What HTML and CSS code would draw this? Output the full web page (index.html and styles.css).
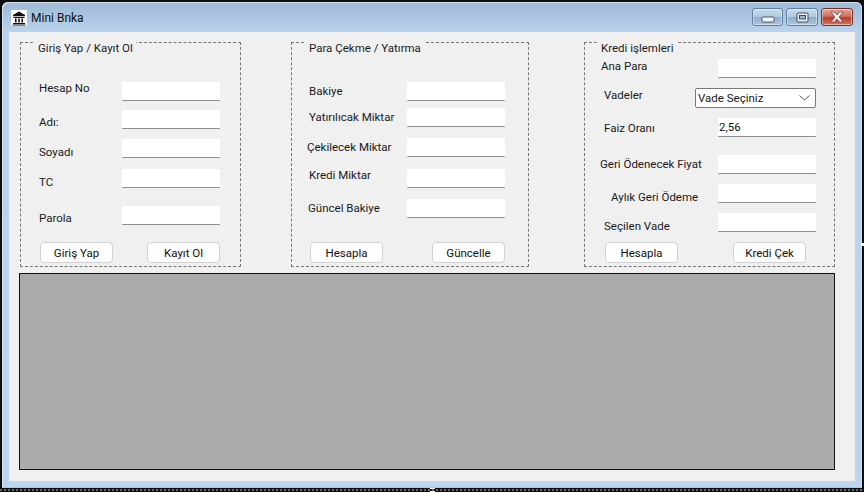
FILE: index.html
```html
<!DOCTYPE html>
<html lang="tr">
<head>
<meta charset="utf-8">
<title>Mini Bnka</title>
<link rel="stylesheet" href="styles.css">
</head>
<body>
<div class="window">
  <header class="titlebar">
    <span class="app-icon">
      <svg width="16" height="16" viewBox="0 0 16 16"><path d="M8 1.500 14 5v1.200H2V5z" fill="#111"/><path d="M2.500 7h11v1h-11zM2 13h12v1H2zM1.500 14.500h13v1h-13z" fill="#111"/><path d="M4 8.500h1.600v4H4zM7.200 8.500h1.600v4H7.200zM10.400 8.500H12v4h-1.600z" fill="#111"/></svg>
    </span>
    <span class="title">Mini Bnka</span>
    <div class="controls">
      <span class="ctl ctl-min"><svg width="14" height="7" viewBox="0 0 14 7"><rect x="1" y="1" width="12" height="5" rx="1" fill="#f4f6f8" stroke="#4a5a6c"/></svg></span>
      <span class="ctl ctl-max"><svg width="13" height="11" viewBox="0 0 13 11"><rect x="1" y="1" width="11" height="9" rx="1" fill="#eef2f6" stroke="#3f4f60"/><rect x="3.500" y="3.500" width="6" height="3.500" fill="#9db6cf" stroke="#3f4f60"/></svg></span>
      <span class="ctl ctl-close"><svg width="18" height="12" viewBox="0 0 18 12"><path d="M3 1h3.500L9 4l2.500-3H15l-4 5 4 5h-3.500L9 8l-2.500 3H3l4-5z" fill="#f4f4f4" stroke="#6e3a34" stroke-width=".7"/></svg></span>
    </div>
  </header>
  <main class="client">
    <div class="panels">
      <section class="panel panel-login">
        <h2 class="legend">Giriş Yap / Kayıt Ol</h2>
        <div class="fields">
          <div class="row"><label class="lbl lbl-hesap">Hesap No</label><input class="box"></div>
          <div class="row"><label class="lbl lbl-adi">Adı:</label><input class="box"></div>
          <div class="row"><label class="lbl lbl-soyadi">Soyadı</label><input class="box"></div>
          <div class="row"><label class="lbl lbl-tc">TC</label><input class="box"></div>
          <div class="row"><label class="lbl lbl-parola">Parola</label><input class="box"></div>
        </div>
        <div class="actions">
          <button class="btn">Giriş Yap</button>
          <button class="btn">Kayıt Ol</button>
        </div>
      </section>
      <section class="panel panel-cash">
        <h2 class="legend">Para Çekme / Yatırma</h2>
        <div class="fields">
          <div class="row"><label class="lbl lbl-bakiye">Bakiye</label><input class="box"></div>
          <div class="row"><label class="lbl lbl-yatir">Yatırılıcak Miktar</label><input class="box"></div>
          <div class="row"><label class="lbl lbl-cek">Çekilecek Miktar</label><input class="box"></div>
          <div class="row"><label class="lbl lbl-kredi">Kredi Miktar</label><input class="box"></div>
          <div class="row"><label class="lbl lbl-guncel">Güncel Bakiye</label><input class="box"></div>
        </div>
        <div class="actions">
          <button class="btn">Hesapla</button>
          <button class="btn">Güncelle</button>
        </div>
      </section>
      <section class="panel panel-credit">
        <h2 class="legend">Kredi işlemleri</h2>
        <div class="fields">
          <div class="row"><label class="lbl lbl-ana">Ana Para</label><input class="box"></div>
          <div class="row"><label class="lbl lbl-vade">Vadeler</label>
            <div class="combo"><span>Vade Seçiniz</span><svg width="11" height="6" viewBox="0 0 11 6"><path d="M.5.5 5.500 5l5-4.500" fill="none" stroke="#555"/></svg></div>
          </div>
          <div class="row"><label class="lbl lbl-faiz">Faiz Oranı</label><input class="box" value="2,56"></div>
          <div class="row"><label class="lbl lbl-geri">Geri Ödenecek Fiyat</label><input class="box"></div>
          <div class="row"><label class="lbl lbl-aylik">Aylık Geri Ödeme</label><input class="box"></div>
          <div class="row"><label class="lbl lbl-secilen">Seçilen Vade</label><input class="box"></div>
        </div>
        <div class="actions">
          <button class="btn">Hesapla</button>
          <button class="btn">Kredi Çek</button>
        </div>
      </section>
    </div>
    <div class="grid-view"></div>
  </main>
</div>
<span class="handle handle-right"></span>
<span class="handle handle-bottom"></span>
</body>
</html>
```
FILE: styles.css
```css
* { box-sizing: border-box; }
html, body { margin: 0; height: 100%; }
body {
  width: 864px;
  height: 492px;
  overflow: hidden;
  padding: 2px 2px 0;
  position: relative;
  background: #0d0d0d;
  font: 11.5px/16px Roboto, "Noto Sans", sans-serif;
  color: #1a1a1a;
}
body::after {
  content: "";
  position: absolute;
  left: 0;
  right: 0;
  bottom: 1px;
  height: 2px;
  background: repeating-linear-gradient(90deg, #6a6a6a 0 2px, #111 2px 4px);
}
.window {
  width: 860px;
  height: 486px;
  display: flex;
  flex-direction: column;
  border-radius: 6px 6px 0 0;
  background: linear-gradient(180deg, #9db9d6 0, #bad3ec 30px, #bdd6ef 100%);
  border-bottom: 1px solid #79dcf6;
  box-shadow: inset 1px 1px 0 #d5e2ef, inset -1px 0 0 #c8dcf0;
}
.titlebar {
  height: 30px;
  flex: none;
  display: flex;
  align-items: center;
  padding: 2px 9px 0;
}
.app-icon {
  width: 16px;
  height: 16px;
  background: #fff;
  display: flex;
  margin-right: 4px;
}
.title { font-size: 12px; color: #111; }
.controls { margin-left: auto; display: flex; gap: 3px; margin-top: -2px; }
.ctl {
  height: 18px;
  width: 31px;
  display: flex;
  align-items: center;
  justify-content: center;
  border: 1px solid #5f7f9f;
  border-radius: 3px;
  box-shadow: inset 0 0 0 1px rgba(255,255,255,.45);
  background: linear-gradient(180deg, #c9d9ea 0, #b3c9df 48%, #8fadcb 52%, #adc6de 100%);
}
.ctl-max { width: 32px; }
.ctl-close {
  width: 32px;
  border-color: #7a3028;
  background: linear-gradient(180deg, #e3a79c 0, #cf6f60 45%, #b53c2c 55%, #d07b68 100%);
}
.ctl-min svg { margin-top: 5px; }

.client {
  margin: 0 7px;
  height: 449px;
  background: #f0f0f0;
  padding: 10px 0 0 10px;
  display: flex;
  flex-direction: column;
}
.panels { display: flex; margin-left: 1px; }
.panel {
  position: relative;
  height: 225px;
  border: 1px dashed #777;
  display: flex;
  flex-direction: column;
}
.panel-login { width: 221px; padding: 39px 20px 3px 18px; }
.panel-cash { width: 238px; margin-left: 50px; padding: 39px 23px 3px 15px; }
.panel-credit { width: 251px; margin-left: 55px; padding: 16px 19px 3px 15px; }
.legend {
  position: absolute;
  top: -1px;
  margin: 0;
  padding: 0 3px;
  height: 14px;
  font: inherit;
  line-height: 12px;
  background: #f0f0f0;
  white-space: nowrap;
}
.panel-login .legend { left: 14px; }
.panel-cash .legend { left: 14px; }
.panel-credit .legend { left: 13px; }

.fields { display: grid; flex: 1; }
.panel-login .fields { grid-template-rows: 28px 29px 30px 37px 36px; }
.panel-cash .fields { grid-template-rows: 26px 30px 31px 30px 43px; }
.panel-credit .fields { grid-template-rows: 29px 30px 37px 29px 29px 29px; }
.row { display: flex; align-items: flex-start; }
.lbl { white-space: nowrap; flex: none; }
.panel-login .lbl { width: 83px; }
.panel-cash .lbl { width: 100px; }
.panel-credit .lbl { width: 116px; }
.box {
  display: block;
  flex: none;
  width: 98px;
  height: 19px;
  border: 0;
  border-bottom: 1px solid #8f8f8f;
  border-radius: 1px;
  background: #fff;
  padding: 0 1px;
  margin-left: auto;
  font: inherit;
  color: #111;
  outline: 0;
}
.combo {
  margin-left: -21px;
  width: 121px;
  height: 20px;
  flex: none;
  display: flex;
  align-items: center;
  justify-content: space-between;
  padding: 0 5px 0 2px;
  background: #fff;
  border: 1px solid #7a7a7a;
  border-radius: 2px;
}
.lbl-hesap { margin-top: -2px; }
.lbl-adi { margin-top: 4px; }
.lbl-soyadi { margin-top: 5px; }
.lbl-tc { margin-top: 5px; }
.lbl-parola { margin-top: 4px; }
.lbl-bakiye { margin-top: 1px; padding-left: 2px; }
.lbl-yatir { margin-top: 1px; padding-left: 2px; }
.lbl-cek { margin-top: 1px; }
.lbl-kredi { margin-top: -2px; padding-left: 2px; }
.lbl-guncel { margin-top: 1px; padding-left: 1px; }
.lbl-ana { margin-top: -1px; padding-left: 1px; }
.lbl-vade { margin-top: -1px; padding-left: 4px; }
.lbl-faiz { margin-top: 2px; padding-left: 4px; }
.lbl-geri { margin-top: 1px; }
.lbl-aylik { margin-top: 5px; padding-left: 11px; }
.lbl-secilen { margin-top: 5px; padding-left: 4px; }

.actions { display: flex; justify-content: space-between; flex: none; }
.panel-login .actions { padding-left: 1px; }
.panel-cash .actions { padding-left: 3px; }
.panel-credit .actions { padding: 0 9px 0 5px; }
.btn {
  width: 73px;
  height: 21px;
  padding: 0;
  background: #fdfdfd;
  border: 1px solid #d2d2d2;
  border-radius: 4px;
  font: inherit;
  color: #111;
}
.grid-view {
  margin-top: 6px;
  width: 816px;
  height: 197px;
  background: #ababab;
  border: 1px solid #111;
}
.handle { position: absolute; background: #fff; }
.handle-right { left: 861px; top: 243px; width: 3px; height: 3px; }
.handle-bottom { left: 430px; top: 488px; width: 5px; height: 4px; }
```
